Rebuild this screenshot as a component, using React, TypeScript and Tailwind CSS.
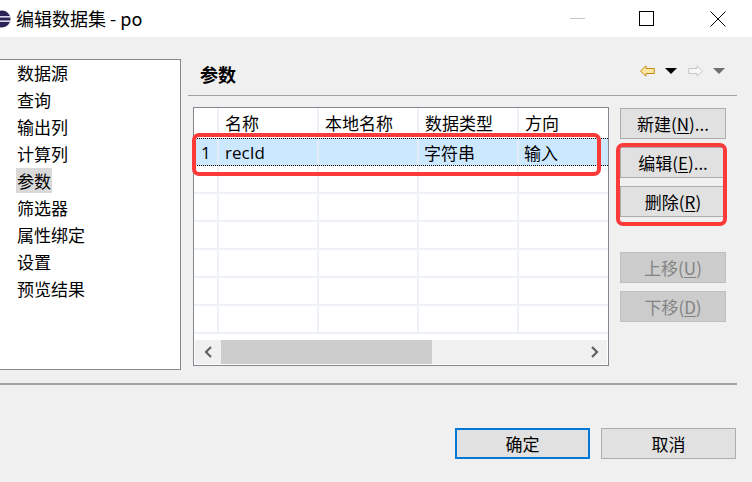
import React from 'react';

const ui = { fontFamily: '"Noto Sans CJK SC", "Noto Sans", sans-serif' };

const navItems = ['数据源', '查询', '输出列', '计算列', '参数', '筛选器', '属性绑定', '设置', '预览结果'];
const columns = ['名称', '本地名称', '数据类型', '方向'];

function SideButton({ label, hotkey, tail = '', disabled = false }: { label: string; hotkey: string; tail?: string; disabled?: boolean }) {
  return (
    <div
      className={
        'flex h-[31px] w-[106px] items-center justify-center border text-[17px] leading-none ' +
        (disabled ? 'border-[#bfbfbf] bg-[#cccccc] text-[#838383]' : 'border-[#adadad] bg-[#e1e1e1] text-black')
      }
    >
      {label}(<span className="underline underline-offset-2">{hotkey}</span>){tail}
    </div>
  );
}

function ArrowLeft({ fill, stroke }: { fill: string; stroke: string }) {
  return (
    <svg width="15" height="12" viewBox="0 0 15 12">
      <path d="M0.5 6 L6 0.8 L6 3.5 L14.3 3.5 L14.3 8.5 L6 8.5 L6 11.2 Z" fill={fill} stroke={stroke} strokeWidth="1" />
    </svg>
  );
}

function Caret({ color }: { color: string }) {
  return (
    <svg width="12" height="6" viewBox="0 0 12 6">
      <path d="M0 0 H12 L6 6 Z" fill={color} />
    </svg>
  );
}

export default function App() {
  return (
    <div className="flex h-[482px] w-[752px] flex-col overflow-hidden bg-[#f0f0f0]" style={ui}>
      {/* title bar */}
      <div className="flex h-[37px] shrink-0 items-center bg-white">
        <svg width="11" height="18" viewBox="0 0 11 18" className="shrink-0">
          <circle cx="2" cy="9" r="8.5" fill="#2c2255" />
          <rect x="-7" y="6" width="18" height="1.6" fill="#d8d8e8" />
          <rect x="-7" y="10.4" width="18" height="1.6" fill="#d8d8e8" />
        </svg>
        <span className="ml-[5px] text-[18px] text-black">编辑数据集 - po</span>
        <div className="ml-auto flex items-center">
          <div className="mr-[54px] h-px w-[15px] bg-[#c4c4c4]" />
          <div className="mr-[56px] h-[15px] w-[15px] border border-black" />
          <svg width="16" height="16" viewBox="0 0 16 16" className="mr-[26px]">
            <path d="M0.5 0.5 L15.5 15.5 M15.5 0.5 L0.5 15.5" stroke="#000" strokeWidth="1" />
          </svg>
        </div>
      </div>

      {/* body */}
      <div className="relative flex flex-1 flex-col">
        <div className="flex">
          {/* left nav list */}
          <div className="mt-[22px] h-[311px] w-[181px] shrink-0 border-y border-r border-[#828790] bg-white">
            {navItems.map((item) => (
              <div key={item} className="flex h-[27px] items-center pb-[2px] pl-[17px] text-[17px] leading-none text-black">
                <span className={item === '参数' ? 'bg-[#d9d9d9] px-[1px] py-[4px] -ml-px' : ''}>{item}</span>
              </div>
            ))}
          </div>

          {/* right panel */}
          <div className="ml-[7px] flex w-[549px] flex-col">
            <div className="flex h-[58px] items-end pb-[12px]">
              <span className="pl-[12px] text-[18px] font-bold leading-none text-black">参数</span>
              <div className="mb-[6px] ml-auto mr-[12px] flex items-center gap-[10px]">
                <ArrowLeft fill="#fde6a6" stroke="#c98a12" />
                <Caret color="#000" />
                <div className="ml-[1px] -scale-x-100">
                  <ArrowLeft fill="#f6f6f6" stroke="#c8c8c8" />
                </div>
                <Caret color="#6e6e6e" />
              </div>
            </div>
            <div className="h-px w-full bg-[#a0a0a0]" />

            <div className="mt-[11px] flex">
              {/* table */}
              <div className="ml-[5px] flex h-[259px] w-[416px] flex-col border border-[#828790] bg-white">
                <div className="flex h-[30px] shrink-0 pb-[2px] text-[17px] text-black">
                  <div className="w-[25px] border-r-2 border-[#eef1f5]" />
                  {columns.map((c, i) => (
                    <div
                      key={c}
                      className={'flex items-center pl-[6px] leading-none ' + (i < 3 ? 'w-[100px] border-r-2 border-[#eef1f5]' : 'flex-1')}
                    >
                      {c}
                    </div>
                  ))}
                </div>
                <div className="flex-1 overflow-hidden">
                  <div className="flex h-[28px] border-y border-dotted border-black bg-[#cce8ff] text-[17px] leading-none text-black">
                    <div className="flex w-[25px] items-center border-r-2 border-[#e4edf5] pl-[7px]" style={{ fontFamily: '"Open Sans", sans-serif' }}>1</div>
                    <div className="flex w-[100px] items-center border-r-2 border-[#e4edf5] pl-[6px]" style={{ fontFamily: '"Open Sans", sans-serif' }}>recId</div>
                    <div className="w-[100px] border-r-2 border-[#e4edf5]" />
                    <div className="flex w-[100px] items-center border-r-2 border-[#e4edf5] pl-[5px]">字符串</div>
                    <div className="flex flex-1 items-center pl-[5px]">输入</div>
                  </div>
                  {[0, 1, 2, 3, 4, 5].map((r) => (
                    <div key={r} className="flex h-[28px] border-b-2 border-[#eef1f5]">
                      <div className="w-[25px] border-r-2 border-[#eef1f5]" />
                      <div className="w-[100px] border-r-2 border-[#eef1f5]" />
                      <div className="w-[100px] border-r-2 border-[#eef1f5]" />
                      <div className="w-[100px] border-r-2 border-[#eef1f5]" />
                      <div className="flex-1" />
                    </div>
                  ))}
                </div>
                {/* horizontal scrollbar */}
                <div className="mx-px mb-[1px] flex h-[24px] shrink-0 items-center bg-[#f0f0f0]">
                  <div className="flex w-[26px] items-center justify-center">
                    <svg width="9" height="12" viewBox="0 0 9 12">
                      <path d="M7 1 L2 6 L7 11" fill="none" stroke="#606060" strokeWidth="2.2" />
                    </svg>
                  </div>
                  <div className="h-[24px] w-[211px] bg-[#cdcdcd]" />
                  <div className="ml-auto flex w-[26px] items-center justify-center">
                    <svg width="9" height="12" viewBox="0 0 9 12">
                      <path d="M2 1 L7 6 L2 11" fill="none" stroke="#606060" strokeWidth="2.2" />
                    </svg>
                  </div>
                </div>
              </div>

              {/* side buttons */}
              <div className="ml-[11px] mt-[1px] flex flex-col">
                <SideButton label="新建" hotkey="N" tail="..." />
                <div className="mt-[8px]">
                  <SideButton label="编辑" hotkey="E" tail="..." />
                </div>
                <div className="mt-[8px]">
                  <SideButton label="删除" hotkey="R" />
                </div>
                <div className="mt-[35px]">
                  <SideButton label="上移" hotkey="U" disabled />
                </div>
                <div className="mt-[8px]">
                  <SideButton label="下移" hotkey="D" disabled />
                </div>
              </div>
            </div>
          </div>
        </div>

        {/* separator */}
        <div className="mt-[13px] h-[2px] w-[737px] bg-[#a0a0a0]" />

        {/* dialog buttons */}
        <div className="mt-[43px] flex justify-end pr-[16px]">
          <div className="flex h-[31px] w-[135px] items-center justify-center border-2 border-[#0078d7] bg-[#e1e1e1] text-[17px] text-black">确定</div>
          <div className="ml-[11px] flex h-[31px] w-[135px] items-center justify-center border border-[#adadad] bg-[#e1e1e1] text-[17px] text-black">取消</div>
        </div>

        {/* red annotation overlays */}
        <div className="pointer-events-none absolute left-[192px] top-[96px] h-[43px] w-[409px] rounded-[7px] border-[4px] border-[#fc3a3a]" />
        <div className="pointer-events-none absolute left-[616px] top-[106px] h-[83px] w-[111px] rounded-[7px] border-[4px] border-[#fc3a3a]" />
      </div>
    </div>
  );
}
